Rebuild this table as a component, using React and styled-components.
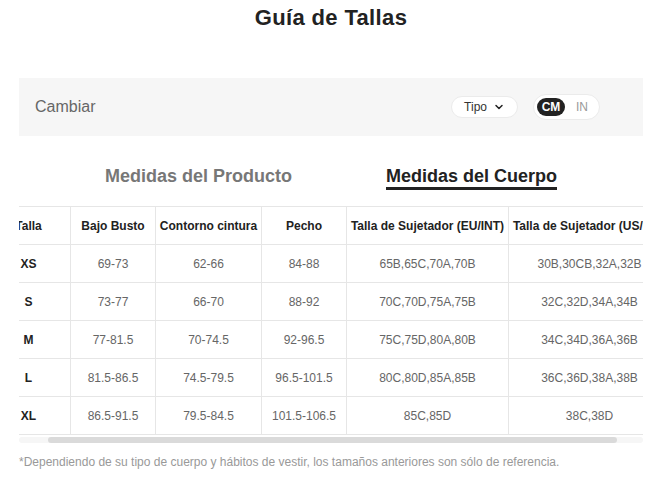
import React, { useLayoutEffect, useRef, useState } from 'react'
import styled, { createGlobalStyle } from 'styled-components'
import { ChevronDown } from 'lucide-react'

const GlobalStyle = createGlobalStyle`
  body {
    margin: 0;
    background: #fff;
    font-family: "Liberation Sans", Arial, sans-serif;
  }
`

const Page = styled.div`
  padding: 0 20px 0 19px;
`

const Title = styled.h2`
  margin: 0;
  padding-top: 4px;
  text-align: center;
  font-size: 22px;
  line-height: 28px;
  font-weight: bold;
  letter-spacing: 0.35px;
  color: #222;
`

const SwitchBar = styled.div`
  margin-top: 46px;
  height: 58px;
  background: #f6f6f6;
  display: flex;
  align-items: center;
  justify-content: space-between;
  padding: 0 43px 0 16px;
`

const SwitchLabel = styled.span`
  font-size: 16px;
  color: #666;
`

const Controls = styled.div`
  display: flex;
  align-items: center;
  gap: 15px;
`

const TypePill = styled.button`
  height: 22px;
  box-sizing: border-box;
  display: flex;
  align-items: center;
  gap: 6px;
  padding: 0 12px 0 12px;
  border: 1px solid #ebebeb;
  border-radius: 11px;
  background: #fff;
  font-family: inherit;
  font-size: 12px;
  color: #333;
`

const UnitToggle = styled.div`
  height: 26px;
  box-sizing: border-box;
  display: flex;
  align-items: center;
  gap: 3px;
  padding: 0 3px;
  border: 1px solid #ebebeb;
  border-radius: 13px;
  background: #fff;
`

const Unit = styled.span`
  width: 28px;
  height: 18px;
  border-radius: 9px;
  display: flex;
  align-items: center;
  justify-content: center;
  font-size: 12px;
  font-weight: ${p => (p.$active ? 'bold' : 'normal')};
  background: ${p => (p.$active ? '#222' : 'transparent')};
  color: ${p => (p.$active ? '#fff' : '#999')};
`

const Tabs = styled.div`
  display: flex;
  justify-content: center;
  gap: 94px;
  padding-top: 29px;
`

const Tab = styled.div`
  font-size: 18px;
  line-height: 22px;
  font-weight: bold;
  color: ${p => (p.$active ? '#222' : '#777')};
  border-bottom: 3px solid ${p => (p.$active ? '#222' : 'transparent')};
`

const TableScroll = styled.div`
  margin-top: 16px;
  overflow-x: auto;
  scrollbar-width: none;

  &::-webkit-scrollbar {
    display: none;
  }
`

const ScrollTrack = styled.div`
  margin-top: 2px;
  height: 6px;
  border-radius: 3px;
  background: #f6f6f6;
  position: relative;
`

const ScrollThumb = styled.div`
  position: absolute;
  top: 0;
  height: 100%;
  border-radius: 3px;
  background: #dadada;
`

const Table = styled.table`
  width: 684px;
  table-layout: fixed;
  border-collapse: separate;
  border-spacing: 0;
  font-size: 12px;
`

const Th = styled.th`
  box-sizing: border-box;
  height: 39px;
  padding: 0;
  text-align: center;
  vertical-align: middle;
  font-weight: bold;
  color: #222;
  white-space: nowrap;
  border-top: 1px solid #e6e6e6;
  border-bottom: 1px solid #e6e6e6;
  border-right: 1px solid #e6e6e6;
`

const Td = styled.td`
  box-sizing: border-box;
  height: 38px;
  padding: 0;
  text-align: center;
  vertical-align: middle;
  white-space: nowrap;
  font-weight: ${p => (p.$size ? 'bold' : 'normal')};
  color: ${p => (p.$size ? '#222' : '#666')};
  border-bottom: 1px solid #e6e6e6;
  border-right: 1px solid #e6e6e6;
`

const Note = styled.p`
  margin: 12px 0 0;
  font-size: 12px;
  line-height: 14px;
  color: #999;
`

const columns = [
  { label: 'Talla', width: 84 },
  { label: 'Bajo Busto', width: 85 },
  { label: 'Contorno cintura', width: 106 },
  { label: 'Pecho', width: 85 },
  { label: 'Talla de Sujetador (EU/INT)', width: 162 },
  { label: 'Talla de Sujetador (US/INT)', width: 162 },
]

const rows = [
  ['XS', '69-73', '62-66', '84-88', '65B,65C,70A,70B', '30B,30CB,32A,32B'],
  ['S', '73-77', '66-70', '88-92', '70C,70D,75A,75B', '32C,32D,34A,34B'],
  ['M', '77-81.5', '70-74.5', '92-96.5', '75C,75D,80A,80B', '34C,34D,36A,36B'],
  ['L', '81.5-86.5', '74.5-79.5', '96.5-101.5', '80C,80D,85A,85B', '36C,36D,38A,38B'],
  ['XL', '86.5-91.5', '79.5-84.5', '101.5-106.5', '85C,85D', '38C,38D'],
]

export default function App() {
  const scrollRef = useRef(null)
  const [thumb, setThumb] = useState({ left: 0, width: 0 })

  const syncThumb = () => {
    const el = scrollRef.current
    if (!el) return
    const { scrollLeft, scrollWidth, clientWidth } = el
    const width = (clientWidth / scrollWidth) * clientWidth
    const max = scrollWidth - clientWidth
    const left = max > 0 ? (scrollLeft / max) * (clientWidth - width) : 0
    setThumb({ left, width })
  }

  useLayoutEffect(() => {
    if (scrollRef.current) scrollRef.current.scrollLeft = 32
    syncThumb()
  }, [])

  return (
    <Page>
      <GlobalStyle />
      <Title>Guía de Tallas</Title>

      <SwitchBar>
        <SwitchLabel>Cambiar</SwitchLabel>
        <Controls>
          <TypePill>
            Tipo
            <ChevronDown size={12} strokeWidth={3} color="#222" />
          </TypePill>
          <UnitToggle>
            <Unit $active>CM</Unit>
            <Unit>IN</Unit>
          </UnitToggle>
        </Controls>
      </SwitchBar>

      <Tabs>
        <Tab>Medidas del Producto</Tab>
        <Tab $active>Medidas del Cuerpo</Tab>
      </Tabs>

      <TableScroll ref={scrollRef} onScroll={syncThumb}>
        <Table>
          <colgroup>
            {columns.map(c => <col key={c.label} style={{ width: c.width }} />)}
          </colgroup>
          <thead>
            <tr>
              {columns.map(c => <Th key={c.label}>{c.label}</Th>)}
            </tr>
          </thead>
          <tbody>
            {rows.map(r => (
              <tr key={r[0]}>
                {r.map((v, i) => <Td key={i} $size={i === 0}>{v}</Td>)}
              </tr>
            ))}
          </tbody>
        </Table>
      </TableScroll>
      <ScrollTrack>
        <ScrollThumb style={{ left: thumb.left, width: thumb.width }} />
      </ScrollTrack>

      <Note>*Dependiendo de su tipo de cuerpo y hábitos de vestir, los tamaños anteriores son sólo de referencia.</Note>
    </Page>
  )
}
